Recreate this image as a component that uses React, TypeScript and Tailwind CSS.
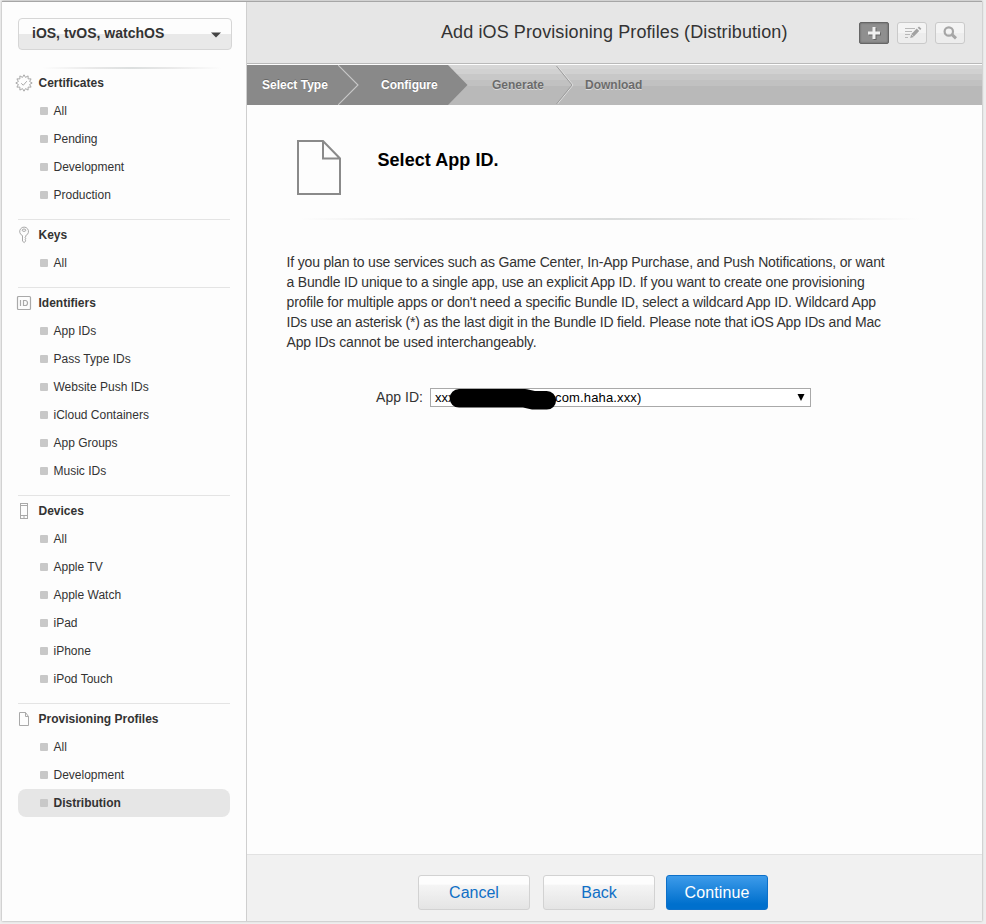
import React from 'react';

type Section = { title: string; icon: React.ReactNode; items: string[] };

const stroke = { fill: 'none', stroke: '#a9a9a9', strokeWidth: 1 };

function sealPath() {
  const points: string[] = [];
  for (let i = 0; i < 24; i++) {
    const r = i % 2 === 0 ? 8.2 : 5.8;
    const a = (i * Math.PI) / 12;
    points.push(`${(8 + r * Math.cos(a)).toFixed(2)},${(8 + r * Math.sin(a)).toFixed(2)}`);
  }
  return points.join(' ');
}

const SealIcon = () => (
  <svg width="16" height="16" viewBox="0 0 16 16" className="overflow-visible" {...stroke}>
    <polygon points={sealPath()} />
    <path d="M5.2 8.3 7.3 10.2 10.8 6.2" />
  </svg>
);

const KeyIcon = () => (
  <svg width="16" height="18" viewBox="0 0 16 18" {...stroke}>
    <path d="M6.5 9.6A4.4 4.4 0 1 1 9.7 9.6V11L8.9 11.8 9.9 12.8 9 13.8 9.7 14.8 8.3 16.6 6.5 15.2Z" />
    <ellipse cx="8" cy="4.2" rx="1.8" ry="1.2" />
  </svg>
);

const IdIcon = () => (
  <svg width="16" height="16" viewBox="0 0 16 16" {...stroke}>
    <rect x="1.5" y="1.5" width="13" height="13" rx="1" strokeWidth="1.2" />
    <path d="M4.5 5V11M7.5 5.5V10.5H9.3C12.3 10.5 12.3 5.5 9.3 5.5Z" strokeWidth="1.2" />
  </svg>
);

const PhoneIcon = () => (
  <svg width="16" height="16" viewBox="0 0 16 16" {...stroke}>
    <rect x="4.5" y="0.5" width="7" height="15" />
    <path d="M4.5 2.5H11.5M4.5 12.5H11.5M7 14H9" />
  </svg>
);

const PageIcon = () => (
  <svg width="16" height="16" viewBox="0 0 16 16" {...stroke}>
    <path d="M3.5 1.5H9.5L12.5 5.5V14.5H3.5ZM9.5 1.5V5.5H12.5" />
  </svg>
);

const sections: Section[] = [
  { title: 'Certificates', icon: <SealIcon />, items: ['All', 'Pending', 'Development', 'Production'] },
  { title: 'Keys', icon: <KeyIcon />, items: ['All'] },
  {
    title: 'Identifiers',
    icon: <IdIcon />,
    items: ['App IDs', 'Pass Type IDs', 'Website Push IDs', 'iCloud Containers', 'App Groups', 'Music IDs'],
  },
  {
    title: 'Devices',
    icon: <PhoneIcon />,
    items: ['All', 'Apple TV', 'Apple Watch', 'iPad', 'iPhone', 'iPod Touch'],
  },
  { title: 'Provisioning Profiles', icon: <PageIcon />, items: ['All', 'Development', 'Distribution'] },
];

function Sidebar() {
  return (
    <aside className="w-[245px] shrink-0 border-r border-[#cfcfcf] bg-[#fdfdfd] pl-4 pr-4 pt-4">
      <button className="flex h-8 w-[214px] items-center justify-between rounded-[4px] border border-[#d6d6d6] bg-[linear-gradient(#fdfdfd_50%,#e9e9e9_50%)] pl-3.5 pr-2.5 text-sm font-bold">
        <span className="-ml-px pb-[3px]">iOS, tvOS, watchOS</span>
        <svg width="10" height="6" viewBox="0 0 10 6" className="mt-0.5" fill="#444">
          <path d="M0 .5H10L5 5.5Z" />
        </svg>
      </button>
      <div className="ml-6 mt-[17px] h-0.5 w-[180px] bg-[linear-gradient(90deg,transparent,#e8e8e8_30%,#dcdfdf_50%,#e8e8e8_70%,transparent)]" />
      <nav>
        {sections.map((section, i) => (
          <section key={section.title} className={i === 0 ? '' : 'mt-2.5 border-t border-[#e4e4e4] pt-px'}>
            <h2 className="-ml-0.5 flex h-7 items-center text-xs font-bold">
              <span className="flex w-4 justify-center">{section.icon}</span>
              <span className="ml-[6.5px]">{section.title}</span>
            </h2>
            <ul>
              {section.items.map((item) => (
                <li
                  key={item}
                  className={
                    'flex h-7 items-center rounded-lg pl-[22px] text-xs ' +
                    (item === 'Distribution' ? 'bg-[#e6e6e6] font-bold' : '')
                  }
                >
                  <span className="mr-[5.5px] size-2 rounded-[1px] bg-[#c8c8c8]" />
                  {item}
                </li>
              ))}
            </ul>
          </section>
        ))}
      </nav>
    </aside>
  );
}

function Header() {
  return (
    <header className="flex h-[62px] shrink-0 items-center border-b border-[#b9b9b9] bg-[#e6e6e6] pr-[17px]">
      <h1 className="ml-[194px] pb-0.5 text-lg tracking-[0.1px]">Add iOS Provisioning Profiles (Distribution)</h1>
      <div className="ml-auto flex gap-2">
        <button className="flex h-[22px] w-[30px] items-center justify-center rounded-[2px] border border-[#666] bg-[#8f8f8f] shadow-[inset_0_0_2px_#555]">
          <svg width="14" height="14" viewBox="0 0 14 14">
            <path d="M8 2V14M2 8H14" stroke="#666" strokeWidth="3" />
            <path d="M7 1V13M1 7H13" stroke="#f0f0f0" strokeWidth="3" />
          </svg>
        </button>
        <button className="flex h-[22px] w-[30px] items-center justify-center rounded-[3px] border border-[#cacaca] bg-[linear-gradient(#f4f4f4_50%,#ededed_50%)]">
          <svg width="18" height="14" viewBox="0 0 18 14" className="mb-px ml-0.5" stroke="#b8b8b8">
            <path d="M1 3.5H11M1 6.5H8M1 9.5H6M1 12.5H4" />
            <path d="M8.6 10.2 14 4.8" stroke="#a2a2a2" strokeWidth="3.4" />
            <path d="M14.9 3.9 16.2 2.6" stroke="#a2a2a2" strokeWidth="3.4" />
            <path d="M7.2 9.4 6.2 13 9.8 12Z" fill="#a2a2a2" stroke="none" />
          </svg>
        </button>
        <button className="flex h-[22px] w-[30px] items-center justify-center rounded-[3px] border border-[#cacaca] bg-[linear-gradient(#f4f4f4_50%,#ededed_50%)]">
          <svg width="14" height="14" viewBox="0 0 14 14" fill="none" stroke="#a6a6a6">
            <circle cx="5.8" cy="5.5" r="4.2" strokeWidth="2.2" />
            <path d="M9 8.6 13 12.4" strokeWidth="3" />
          </svg>
        </button>
      </div>
    </header>
  );
}

function Steps() {
  return (
    <div className="mt-px flex h-10 shrink-0 bg-[linear-gradient(#d6d6d6_0_10%,#d1d1d1_10%_23%,#c8c8c8_23%_38%,#c1c1c1_38%_53%,#b9b9b9_53%)] text-xs font-bold leading-[40px] text-[#6b6b6b] [text-shadow:0_1px_0_#ddd]">
      <div className="flex h-10 w-[201px] bg-[#898989] text-white [text-shadow:0_-1px_0_#666]">
        <span className="ml-[15px] w-[76px]">Select Type</span>
        <svg width="21" height="40" viewBox="0 0 21 40" fill="none" stroke="#c9c9c9" strokeWidth="1.1">
          <path d="M0 0 20 20 0 40" />
        </svg>
        <span className="ml-[22px]">Configure</span>
      </div>
      <svg width="20" height="40" viewBox="0 0 20 40" fill="#898989">
        <path d="M0 0 19.5 20 0 40Z" />
      </svg>
      <span className="ml-[24px] w-[64px]">Generate</span>
      <svg width="18" height="40" viewBox="0 0 18 40" fill="none">
        <path d="M1.5 1 17 20 1.5 39" stroke="#e2e2e2" />
        <path d="M.5 1 16 20 .5 39" stroke="#9b9b9b" />
      </svg>
      <span className="ml-[11px]">Download</span>
    </div>
  );
}

function AppIdField() {
  return (
    <div className="ml-[129px] mt-[35px] flex h-5 items-center text-sm">
      <span className="w-[54px] tracking-[0.05px]">App ID:</span>
      <div className="relative flex h-[19px] w-[381px] items-center justify-between border border-[#a9a9a9] bg-white px-1 text-[13px] leading-[17px] text-black">
        <span className="flex pt-px">
          <span className="w-[120px]">xxx</span>
          <span className="tracking-[0.15px]">com.haha.xxx)</span>
        </span>
        <svg width="8" height="7" viewBox="0 0 8 7" className="mr-px">
          <path d="M.5 0H7.5L4 7Z" />
        </svg>
        <svg className="absolute -top-px left-[17px]" width="110" height="24" viewBox="0 0 110 24">
          <path d="M11 10.3H77L86 12.3H98.8" fill="none" stroke="#000" strokeWidth="18.6" strokeLinecap="round" strokeLinejoin="round" />
        </svg>
      </div>
    </div>
  );
}

function Content() {
  return (
    <section className="flex-1 bg-[#fdfdfd]">
      <div className="ml-[49px] flex pt-[34px]">
        <svg width="46" height="57" viewBox="0 0 46 57" fill="none" stroke="#8a8a8a" strokeWidth="2">
          <path d="M2 2H27L44 19.5V55H2ZM27 2V19.5H44" />
        </svg>
        <h2 className="ml-[35.5px] mt-[7px] text-lg font-bold leading-7 tracking-[0.05px] text-black">Select App ID.</h2>
      </div>
      <div className="ml-[53px] mt-[22px] h-0.5 w-[620px] bg-[linear-gradient(90deg,transparent,#e9e9e9_20%,#dadcdc_50%,#e9e9e9_80%,transparent)]" />
      <p className="ml-[39.5px] mt-8 whitespace-nowrap text-sm leading-5 tracking-[-0.165px]">
        If you plan to use services such as Game Center, In-App Purchase, and Push Notifications, or want
        <br />
        <span className="tracking-[-0.185px]">
          a Bundle ID unique to a single app, use an explicit App ID. If you want to create one provisioning
        </span>
        <br />
        <span className="tracking-[-0.155px]">
          profile for multiple apps or don't need a specific Bundle ID, select a wildcard App ID. Wildcard App
        </span>
        <br />
        <span className="tracking-[-0.2px]">
          IDs use an asterisk (*) as the last digit in the Bundle ID field. Please note that iOS App IDs and Mac
        </span>
        <br />
        <span className="tracking-[-0.13px]">App IDs cannot be used interchangeably.</span>
      </p>
      <AppIdField />
    </section>
  );
}

function Footer() {
  const plain =
    'h-[35px] w-[112px] rounded-[3px] border border-[#d2d2d2] bg-[linear-gradient(#fdfdfd_0_25%,#f5f5f5_27%,#e4e4e4)] text-[#0f6fc6] pt-px';
  return (
    <footer className="flex h-[67px] shrink-0 border-t border-[#e2e2e2] bg-[#f1f1f1] pl-[171px] pt-5 text-base">
      <button className={plain}>Cancel</button>
      <button className={'ml-[13px] ' + plain}>Back</button>
      <button className="ml-[11px] h-[35px] w-[102px] rounded-[3px] border border-[#0d70c9] bg-[linear-gradient(#3d9bea,#0070cd_85%)] pt-px tracking-[0.1px] text-white">
        Continue
      </button>
    </footer>
  );
}

export default function App() {
  return (
    <div className="h-[924px] w-[986px] overflow-hidden bg-[#eeeeee] pl-0.5 pt-px font-['Liberation_Sans',Arial,sans-serif] text-[#333]">
      <div className="flex h-[920px] w-[980px] border-t border-[#a6a6a6] shadow-[0_0_2px_#999]">
        <Sidebar />
        <main className="flex flex-1 flex-col bg-[#fdfdfd]">
          <Header />
          <Steps />
          <Content />
          <Footer />
        </main>
      </div>
    </div>
  );
}
